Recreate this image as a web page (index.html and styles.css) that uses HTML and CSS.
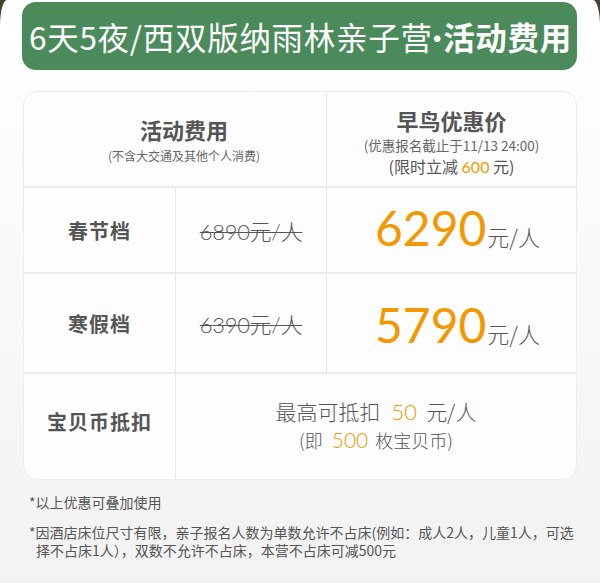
FILE: index.html
```html
<!DOCTYPE html>
<html lang="zh-CN">
<head>
<meta charset="utf-8">
<link rel="stylesheet" href="styles.css">
</head>
<body>
<div class="page">
  <div class="banner">
    <span class="banner-light">6天5夜/西双版纳雨林亲子营</span><span class="banner-dot">·</span><span class="banner-bold">活动费用</span>
  </div>

  <div class="card">
    <div class="cell head head-left">
      <div class="head-title">活动费用</div>
      <div class="head-sub">(不含大交通及其他个人消费)</div>
    </div>
    <div class="cell head head-right">
      <div class="head-title">早鸟优惠价</div>
      <div class="head-sub2">(优惠报名截止于11/13 24:00)</div>
      <div class="head-sub3">(限时立减 <span class="orange">600</span> 元)</div>
    </div>

    <div class="cell label">春节档</div>
    <div class="cell old"><span class="strike">6890元/人</span></div>
    <div class="cell price"><span class="big">6290</span><span class="unit">元/人</span></div>

    <div class="cell label">寒假档</div>
    <div class="cell old"><span class="strike">6390元/人</span></div>
    <div class="cell price price-low"><span class="big">5790</span><span class="unit">元/人</span></div>

    <div class="cell label last">宝贝币抵扣</div>
    <div class="cell coins last">
      <div class="coins-main">最高可抵扣<span class="orange">50</span>元/人</div>
      <div class="coins-sub">(即<span class="orange">500</span>枚宝贝币)</div>
    </div>
  </div>

  <div class="notes">
    <p class="note">*以上优惠可叠加使用</p>
    <p class="note">*因酒店床位尺寸有限，亲子报名人数为单数允许不占床(例如：成人2人，儿童1人，可选择不占床1人），双数不允许不占床，本营不占床可减500元</p>
  </div>
</div>
</body>
</html>
```

FILE: styles.css
```css
html, body {
  margin: 0;
  padding: 0;
}

body {
  background: #4a4030;
  width: 600px;
  height: 583px;
  overflow: hidden;
  font-family: "Noto Sans CJK SC", "Noto Sans", sans-serif;
}

.page {
  width: 600px;
  height: 583px;
  background: linear-gradient(#ffffff 0%, #fafafa 40%, #f2f2f2 100%);
  border-top-left-radius: 7px 26px;
  border-top-right-radius: 7px 26px;
  padding-top: 2px;
  box-sizing: border-box;
}

.banner {
  margin: 0 23px 0 22px;
  height: 68px;
  border-radius: 14px;
  background: #4b8a5b;
  color: #ffffff;
  display: flex;
  align-items: center;
  justify-content: center;
  font-size: 31.5px;
  letter-spacing: 0.7px;
  white-space: nowrap;
  padding-left: 2px;
}

.banner-light {
  font-weight: 400;
}

.banner-dot {
  font-family: "Lato", sans-serif;
  font-weight: 900;
  margin: 0 1px 0 0;
}

.banner-bold {
  font-weight: 700;
}

.card {
  margin: 21px 23px 0 23px;
  height: 389px;
  box-sizing: border-box;
  border: 1px solid #ececec;
  border-radius: 14px;
  background: #fdfdfd;
  display: grid;
  grid-template-columns: 152px 151px 1fr;
  grid-template-rows: 96px 86px 100px 1fr;
  overflow: hidden;
  color: #555555;
}

.cell {
  display: flex;
  flex-direction: column;
  align-items: center;
  justify-content: center;
  border-right: 1px solid #e8e8e8;
  border-bottom: 2px solid #ebebeb;
}

.head-left {
  grid-column: 1 / 3;
  padding-left: 18px;
}

.head-right {
  border-right: none;
  padding-top: 6px;
}

.head-title {
  font-size: 22px;
  font-weight: 700;
  line-height: 26px;
  color: #555555;
}

.head-left .head-title {
  margin-top: 2px;
}

.head-sub {
  font-size: 12px;
  line-height: 16px;
  margin-top: 6px;
  color: #666666;
}

.head-sub2 {
  font-size: 13.5px;
  line-height: 20px;
  margin-top: 2px;
  color: #666666;
}

.head-sub3 {
  font-size: 16px;
  line-height: 22px;
  color: #555555;
}

.orange {
  color: #f39800;
  font-family: "Lato", "Noto Sans", sans-serif;
}

.label {
  font-size: 20px;
  font-weight: 700;
  color: #555555;
  letter-spacing: 1px;
}

.old {
  font-size: 22px;
  font-weight: 300;
  color: #555555;
}

.strike {
  text-decoration: line-through;
  text-decoration-thickness: 1px;
  font-family: "Lato", "Noto Sans CJK SC", sans-serif;
  font-weight: 300;
  letter-spacing: -0.3px;
}

.price {
  flex-direction: row;
  align-items: baseline;
  border-right: none;
  padding-top: 16px;
  padding-left: 12px;
}

.price-low {
  padding-top: 27px;
}

.big {
  font-family: "Lato", "Noto Sans", sans-serif;
  font-size: 48px;
  color: #f39800;
  line-height: 1;
}

.unit {
  font-size: 22px;
  font-weight: 300;
  color: #555555;
  margin-left: 1px;
}

.last {
  border-bottom: none;
}

.coins {
  grid-column: 2 / 4;
  border-right: none;
  padding-bottom: 2px;
}

.coins-main {
  font-size: 21px;
  line-height: 28px;
  font-weight: 300;
}

.coins-main .orange {
  font-size: 22px;
  margin: 0 9px 0 11px;
}

.coins-sub {
  font-size: 18px;
  line-height: 28px;
  font-weight: 300;
}

.coins-sub .orange {
  font-size: 21px;
  margin: 0 7px 0 9px;
}

.label.last {
  padding-bottom: 10px;
}

.notes {
  margin: 13px 26px 0 29px;
  color: #555555;
}

.note {
  margin: 0 0 12px 0;
  font-size: 14px;
  line-height: 18px;
  padding-left: 7px;
  text-indent: -7px;
}
```
